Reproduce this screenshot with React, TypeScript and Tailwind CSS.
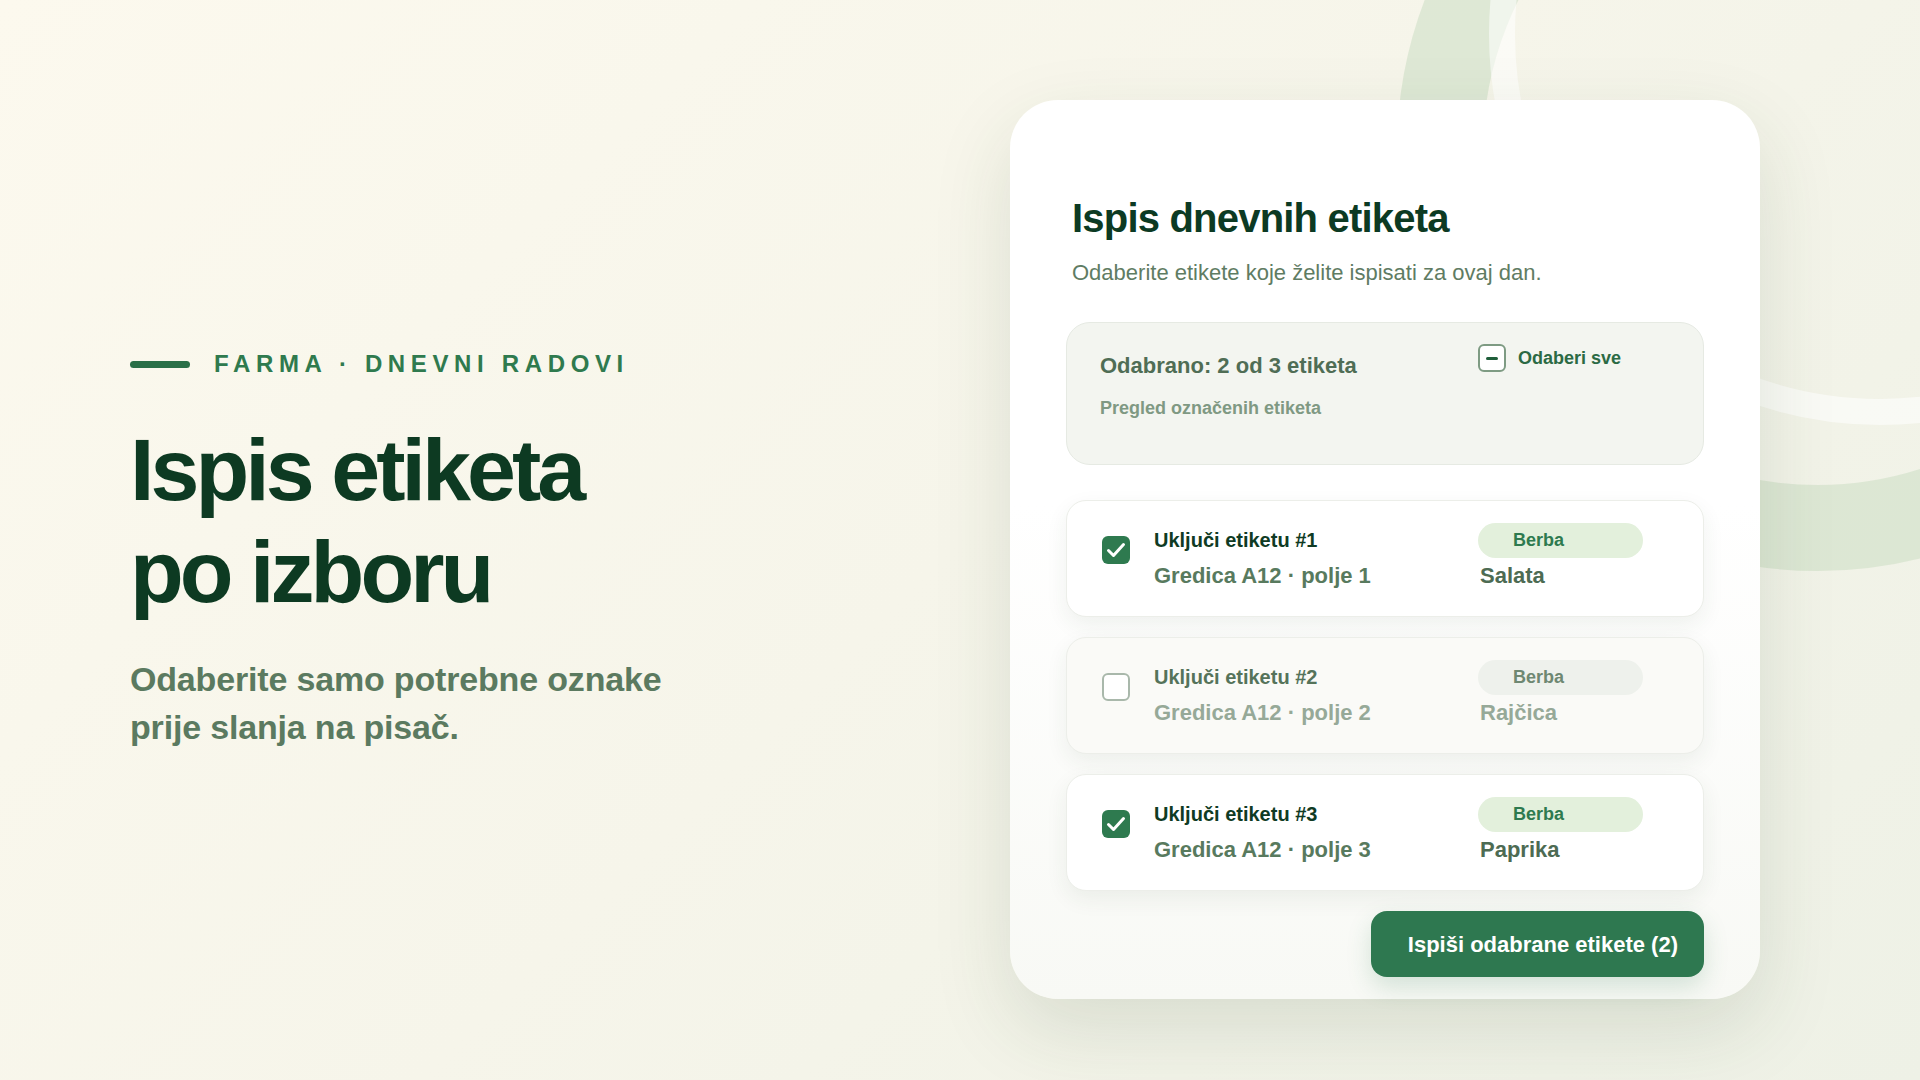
import React from 'react';

interface LabelRow {
  id:      number;
  bed:     string;
  crop:    string;
  checked: boolean;
}

const rows: LabelRow[] = [
  { id: 1, bed: 'Gredica A12 · polje 1', crop: 'Salata',  checked: true  },
  { id: 2, bed: 'Gredica A12 · polje 2', crop: 'Rajčica', checked: false },
  { id: 3, bed: 'Gredica A12 · polje 3', crop: 'Paprika', checked: true  },
];

const Checkbox = ({ checked }: { checked: boolean }) =>
  checked ? (
    <span className="flex h-[28px] w-[28px] items-center justify-center rounded-[6px] bg-[#2e7a4f]">
      <svg width="22" height="22" viewBox="0 0 22 22" fill="none">
        <path
          d="M3.5 11.5l5 5L18.5 5.5"
          stroke="white"
          strokeWidth="3"
          strokeLinecap="round"
          strokeLinejoin="round"
        />
      </svg>
    </span>
  ) : (
    <span className="block h-[28px] w-[28px] rounded-[6px] border-2 border-[#a9b8ab] bg-white" />
  );

const Row = ({ row }: { row: LabelRow }) => {
  const on = row.checked;
  return (
    <div
      className={`flex h-[117px] items-start rounded-[20px] border border-[#eceee9] pl-[35px] pr-[60px] pt-[22px] shadow-[0_8px_22px_rgba(40,70,40,0.07)] ${
        on ? 'bg-white' : 'bg-[#fafaf7]'
      }`}
    >
      <div className="mt-[13px]">
        <Checkbox checked={on} />
      </div>
      <div className="ml-6 flex-1">
        <div
          className={`text-[20px] font-bold leading-[35px] ${
            on ? 'text-[#0f3b24]' : 'text-[#55735a]'
          }`}
        >
          Uključi etiketu #{row.id}
        </div>
        <div
          className={`text-[22px] font-bold leading-[35px] ${
            on ? 'text-[#587a5e]' : 'text-[#96a998]'
          }`}
        >
          {row.bed}
        </div>
      </div>
      <div className="w-[165px]">
        <div
          className={`flex h-[35px] items-center rounded-full pl-[35px] text-[18px] font-bold ${
            on ? 'bg-[#e3f0dc] text-[#2e7a4f]' : 'bg-[#eef1ec] text-[#6e8872]'
          }`}
        >
          Berba
        </div>
        <div
          className={`pl-[2px] text-[22px] font-bold leading-[35px] ${
            on ? 'text-[#4d6b53]' : 'text-[#96a998]'
          }`}
        >
          {row.crop}
        </div>
      </div>
    </div>
  );
};

export default function App() {
  const selected = rows.filter((r) => r.checked).length;

  return (
    <div className="relative flex h-screen w-full items-center justify-between overflow-hidden bg-[linear-gradient(135deg,#fcf9ee_0%,#f6f5ea_50%,#eef1e6_100%)] pl-[130px] pr-[160px] pt-[19px] font-['Liberation_Sans',Arial,sans-serif]">
      {/* background rings */}
      <svg
        className="pointer-events-none absolute inset-0"
        width="1920"
        height="1080"
        viewBox="0 0 1920 1080"
        fill="none"
      >
        <circle cx="1818" cy="150" r="378" stroke="#cfdfc6" strokeOpacity="0.6" strokeWidth="86" />
        <circle cx="1880" cy="34" r="378" stroke="#ffffff" strokeOpacity="0.55" strokeWidth="26" />
      </svg>

      {/* left column */}
      <div className="relative">
        <div className="flex items-center gap-6">
          <span className="block h-[7px] w-[60px] rounded-full bg-[#2a6f47]" />
          <span className="text-[24px] font-bold uppercase leading-[32px] tracking-[0.235em] text-[#2f7a4e]">
            Farma · Dnevni radovi
          </span>
        </div>
        <h1 className="mt-[39px] text-[88px] font-bold leading-[102px] tracking-[-0.045em] text-[#0d3a22]">
          Ispis etiketa
          <br />
          po izboru
        </h1>
        <p className="mt-[32px] text-[34px] font-bold leading-[48px] tracking-[-0.005em] text-[#5b7a60]">
          Odaberite samo potrebne oznake
          <br />
          prije slanja na pisač.
        </p>
      </div>

      {/* card */}
      <div className="relative h-[899px] w-[750px] rounded-[48px] bg-[linear-gradient(180deg,#ffffff_0%,#ffffff_45%,#f8f9f5_100%)] px-[56px] pt-[94px] shadow-[0_30px_80px_rgba(40,70,40,0.13)]">
        <h2 className="pl-[6px] text-[40px] font-bold leading-[48px] tracking-[-0.02em] text-[#0c3a23]">
          Ispis dnevnih etiketa
        </h2>
        <p className="mt-[15px] pl-[6px] text-[22px] leading-[32px] text-[#5f7c63]">
          Odaberite etikete koje želite ispisati za ovaj dan.
        </p>

        <div className="mt-[33px] flex h-[143px] items-start rounded-[24px] border border-[#e6eae3] bg-[#f3f5f0] pl-[33px] pr-[60px] pt-[21px]">
          <div className="flex-1">
            <div className="mt-[5px] text-[22px] font-bold leading-[33px] text-[#4f6d55]">
              Odabrano: {selected} od {rows.length} etiketa
            </div>
            <div className="mt-[13px] text-[18px] font-bold leading-[27px] text-[#7f9983]">
              Pregled označenih etiketa
            </div>
          </div>
          <div className="flex w-[165px] items-center gap-3">
            <span className="flex h-[28px] w-[28px] items-center justify-center rounded-[6px] border-2 border-[#7e9b83] bg-white">
              <span className="block h-[3px] w-[12px] rounded-full bg-[#1f5e3a]" />
            </span>
            <span className="text-[18px] font-bold text-[#2b6a44]">Odaberi sve</span>
          </div>
        </div>

        <div className="mt-[35px] flex flex-col gap-5">
          {rows.map((row) => (
            <Row key={row.id} row={row} />
          ))}
        </div>

        <div className="mt-5 flex justify-end">
          <button className="h-[66px] rounded-[16px] bg-[#2e7850] pl-[37px] pr-[26px] text-[22px] font-bold text-white shadow-[0_10px_24px_rgba(46,120,80,0.18)]">
            Ispiši odabrane etikete ({selected})
          </button>
        </div>
      </div>
    </div>
  );
}
